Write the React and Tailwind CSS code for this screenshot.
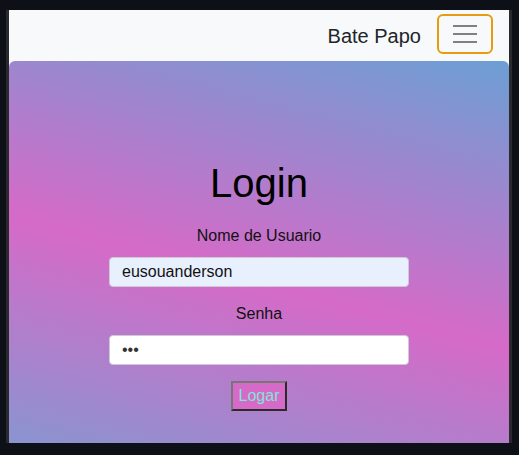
export default function App() {
  return (
    <div className="w-[519px] h-[455px] bg-[#0d1117] pt-[10px] pl-[6px] overflow-hidden" style={{ fontFamily: '"Liberation Sans", Arial, sans-serif' }}>
      <div className="w-[506px] h-[433px] border-x-[3px] border-[#2a2a2e] bg-[#f8f9fa] flex flex-col">
        <nav className="h-[51px] flex items-center justify-end pr-[16px]">
          <span className="text-[20px] text-[#212529] mr-[16px] leading-[30px]">Bate Papo</span>
          <button className="w-[56px] h-[40px] rounded-[6px] border-2 border-[#e89b0c] flex flex-col items-center justify-center gap-[6px] -mt-[4px]">
            <span className="block w-[24px] h-[2px] bg-[#808080]" />
            <span className="block w-[24px] h-[2px] bg-[#808080]" />
            <span className="block w-[24px] h-[2px] bg-[#808080]" />
          </button>
        </nav>
        <main className="flex-1 rounded-t-[6px] bg-[linear-gradient(15deg,#8a94d0_0%,#d66ac8_44%,#6c9fd4_100%)] flex flex-col items-center pt-[98px]">
          <h1 className="text-[40px] leading-[48px] text-[#000]">Login</h1>
          <label className="mt-[17px] text-[16px] leading-[24px] text-[#111]">Nome de Usuario</label>
          <input
            readOnly
            defaultValue="eusouanderson"
            className="mt-[9px] w-[300px] h-[30px] rounded-[4px] border border-[#cfc8d8] bg-[#e8f0fe] px-[12px] text-[16px] text-[#111] outline-none"
            style={{ fontFamily: '"Liberation Sans", Arial, sans-serif' }}
          />
          <label className="mt-[15px] text-[16px] leading-[24px] text-[#111]">Senha</label>
          <input
            readOnly
            type="password"
            defaultValue="abc"
            className="mt-[9px] w-[300px] h-[30px] rounded-[4px] border border-[#cfc8d8] bg-white px-[12px] text-[16px] text-[#333] outline-none"
            style={{ fontFamily: '"Liberation Sans", Arial, sans-serif' }}
          />
          <button className="mt-[16px] h-[30px] px-[6px] bg-[#d66ac8] text-[#7fe5d5] text-[16px] border-2 border-t-[#767676] border-l-[#767676] border-b-[#2b2b2b] border-r-[#2b2b2b]">
            Logar
          </button>
        </main>
      </div>
    </div>
  );
}
